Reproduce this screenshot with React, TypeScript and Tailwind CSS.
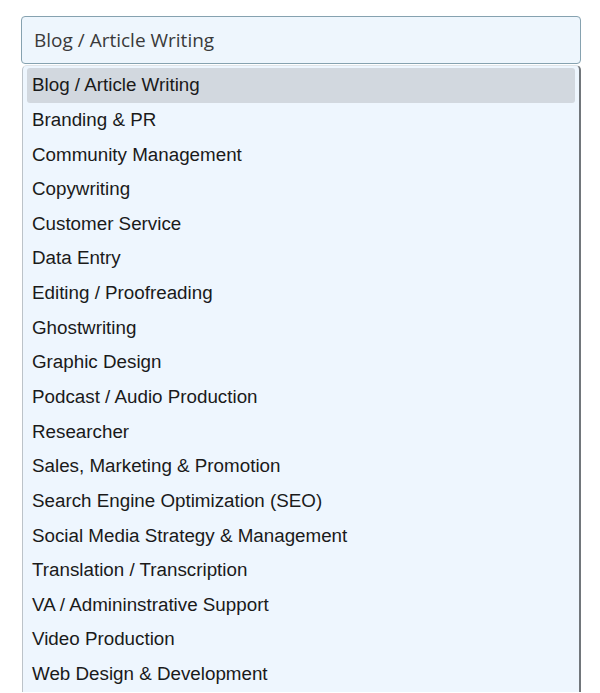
const options = [
  "Blog / Article Writing",
  "Branding & PR",
  "Community Management",
  "Copywriting",
  "Customer Service",
  "Data Entry",
  "Editing / Proofreading",
  "Ghostwriting",
  "Graphic Design",
  "Podcast / Audio Production",
  "Researcher",
  "Sales, Marketing & Promotion",
  "Search Engine Optimization (SEO)",
  "Social Media Strategy & Management",
  "Translation / Transcription",
  "VA / Admininstrative Support",
  "Video Production",
  "Web Design & Development",
]

export default function App() {
  const selected = options[0]
  return (
    <div className="h-[693px] w-[600px] overflow-hidden bg-white px-[21px] pt-[16px]">
      <div className="flex h-[48px] w-[560px] items-center rounded-[4px] border border-[#86a2b0] bg-[#eef6fd] pl-[12px] font-['Open_Sans',sans-serif] text-[19px] text-[#3a3a3a]">
        {selected}
      </div>
      <ul className="mt-[1px] ml-[1px] w-[559px] rounded-t-[5px] border-t border-l border-r-2 border-t-[#dfe4e8] border-l-[#bcc3c9] border-r-[#71767b] bg-[#eef6fe] px-[4px] pt-[2px] font-['Liberation_Sans',Arial,sans-serif] text-[18.8px] text-[#1a1a1a]">
        {options.map((option) => (
          <li
            key={option}
            className={
              option === selected
                ? "flex h-[34.65px] items-center rounded-[3px] bg-[#d2d8df] pl-[5px]"
                : "flex h-[34.65px] items-center pl-[5px]"
            }
          >
            {option}
          </li>
        ))}
      </ul>
    </div>
  )
}
